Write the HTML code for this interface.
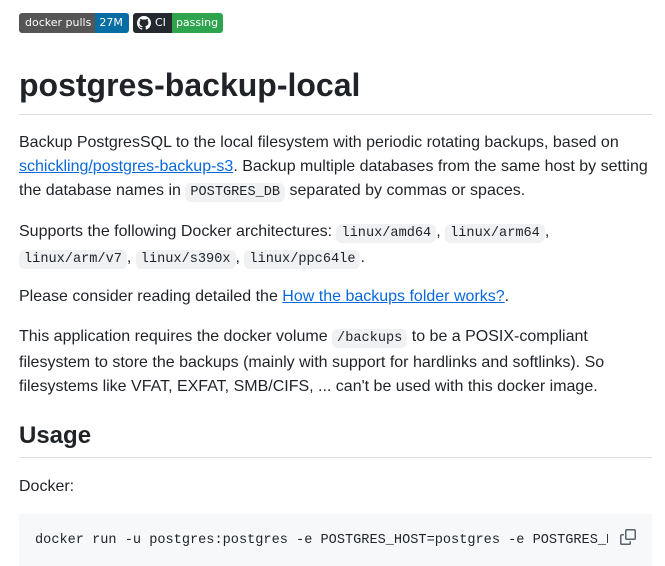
<!DOCTYPE html>
<html><head><meta charset="utf-8"><style>
body{margin:0;background:#fff;color:#1f2328;font-family:"Liberation Sans",sans-serif;font-size:16px;line-height:24px}
.w{position:absolute;left:19px;width:633px;top:0}
.b{position:absolute;top:13px;height:20px;font-family:"DejaVu Sans",sans-serif;font-size:11px;color:#fff;line-height:20px;display:flex;border-radius:3px;overflow:hidden}
.b span{padding:0 4px}
h1{position:absolute;top:63px;left:0;width:633px;margin:0;font-size:32px;line-height:44px;font-weight:bold;border-bottom:1px solid #d8dee4;height:52px;box-sizing:border-box}
h2{position:absolute;top:418px;left:0;width:633px;margin:0;font-size:24px;line-height:36px;font-weight:bold;border-bottom:1px solid #d8dee4;height:40px;box-sizing:border-box}
p{position:absolute;left:0;width:633px;margin:0}
a{color:#0969da;text-decoration:underline}
code{font-family:"Liberation Mono",monospace;font-size:13.6px;background:#eff1f3;padding:2px 5px;border-radius:6px}
pre{position:absolute;left:0;top:514px;width:633px;height:52px;margin:0;background:#f6f8fa;box-sizing:border-box;padding:16px 16px;font-family:"Liberation Mono",monospace;font-size:13.6px;line-height:22px;overflow:hidden;white-space:pre}
</style></head><body>
<div class="b" style="left:19px;width:110px"><span style="background:#555;padding-left:6px">docker pulls</span><span style="background:#066da5;flex:1">27M</span></div>
<div class="b" style="left:133px;width:90px"><span style="background:#24292f;padding-left:4px;padding-right:6px;display:flex;align-items:center;gap:4px"><svg width="14" height="14" viewBox="0 0 16 16"><path fill="#fff" d="M8 0C3.58 0 0 3.58 0 8c0 3.540 2.29 6.530 5.47 7.59.4.07.55-.17.55-.38v-1.33c-2.23.48-2.7-1.07-2.7-1.07-.36-.92-.89-1.170-.89-1.17-.73-.5.05-.49.05-.49.8.06 1.23.83 1.23.83.72 1.22 1.87.87 2.33.66.07-.52.28-.87.5-1.07-1.78-.2-3.64-.89-3.64-3.95 0-.87.31-1.59.82-2.15-.08-.2-.36-1.02.08-2.12 0 0 .67-.21 2.2.82a7.6 7.6 0 0 1 4 0c1.53-1.04 2.2-.82 2.2-.82.44 1.1.16 1.92.08 2.12.51.56.82 1.27.82 2.15 0 3.07-1.87 3.75-3.65 3.95.29.25.54.73.54 1.48v2.2c0 .21.15.46.55.38A8 8 0 0 0 16 8c0-4.42-3.58-8-8-8z"/></svg>CI</span><span style="background:#2ea44f;flex:1">passing</span></div>
<div class="w">
<h1>postgres-backup-local</h1>
<p style="top:131px">Backup PostgresSQL to the local filesystem with periodic rotating backups, based on <a>schickling/postgres-backup-s3</a>. Backup multiple databases from the same host by setting the database names in <code>POSTGRES_DB</code> separated by commas or spaces.</p>
<p style="top:220px">Supports the following Docker architectures: <code>linux/amd64</code>, <code>linux/arm64</code>, <code>linux/arm/v7</code>, <code>linux/s390x</code>, <code>linux/ppc64le</code>.</p>
<p style="top:285px">Please consider reading detailed the <a>How the backups folder works?</a>.</p>
<p style="top:325px">This application requires the docker volume <code>/backups</code> to be a POSIX-compliant filesystem to store the backups (mainly with support for hardlinks and softlinks). So filesystems like VFAT, EXFAT, SMB/CIFS, ... can't be used with this docker image.</p>
<h2>Usage</h2>
<p style="top:475px">Docker:</p>
<pre><span style="display:inline-block;width:573px;overflow:hidden;vertical-align:top">docker run -u postgres:postgres -e POSTGRES_HOST=postgres -e POSTGRES_DB=dbname</span></pre>
<svg style="position:absolute;left:601px;top:529px" width="16" height="16" viewBox="0 0 16 16" fill="#59636e"><path d="M0 6.75C0 5.78.78 5 1.75 5h1.5a.75.75 0 0 1 0 1.5h-1.5a.25.25 0 0 0-.25.25v7.5c0 .14.11.25.25.25h7.5a.25.25 0 0 0 .25-.25v-1.5a.75.75 0 0 1 1.5 0v1.5A1.75 1.75 0 0 1 9.250 16h-7.5A1.75 1.75 0 0 1 0 14.25Z"/><path d="M5 1.75C5 .78 5.78 0 6.75 0h7.5C15.22 0 16 .78 16 1.75v7.5A1.75 1.75 0 0 1 14.25 11h-7.5A1.75 1.75 0 0 1 5 9.25Zm1.75-.25a.25.25 0 0 0-.25.25v7.5c0 .14.11.25.25.25h7.5a.25.25 0 0 0 .25-.25v-7.5a.25.25 0 0 0-.25-.25Z"/></svg>
</div>
</body></html>
